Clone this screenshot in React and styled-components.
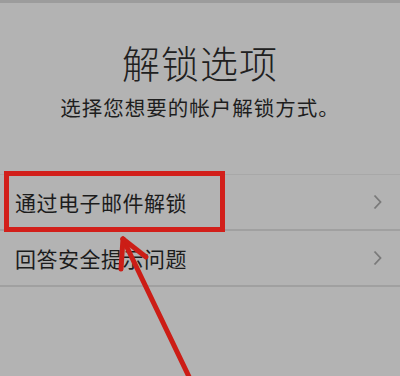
import React from 'react'
import styled, { createGlobalStyle } from 'styled-components'

const Global = createGlobalStyle`
  html, body { margin: 0; padding: 0; }
  body { background: #b3b3b3; font-family: "Noto Sans CJK SC", "Noto Sans", sans-serif; }
`

const Page = styled.div`
  position: relative;
  width: 400px;
  height: 376px;
  overflow: hidden;
  background: #b3b3b3;
  border-top: 3px solid #9c9c9c;
  box-sizing: border-box;
`

const Header = styled.div`
  display: flex;
  flex-direction: column;
  align-items: center;
  padding-top: 37px;
`

const Title = styled.h1`
  margin: 0;
  font-size: 38px;
  line-height: 44px;
  font-weight: 300;
  color: #202020;
  letter-spacing: 1px;
`

const Subtitle = styled.p`
  margin: 10px 0 0;
  font-size: 20.5px;
  line-height: 26px;
  color: #1e1e1e;
  letter-spacing: 1px;
`

const List = styled.div`
  position: relative;
  margin-top: 54px;
  border-top: 1px solid #a8a8a8;
`

const Row = styled.div`
  display: flex;
  align-items: center;
  justify-content: space-between;
  height: 56px;
  padding: 0 18px 0 15px;
  box-sizing: border-box;
  border-bottom: 2px solid #a0a0a0;
`

const Label = styled.span`
  font-size: 21px;
  color: #1c1c1c;
  letter-spacing: 0.5px;
`

const Chevron = styled.svg`
  width: 9px;
  height: 16px;
  flex: none;
`

const Highlight = styled.div`
  position: absolute;
  left: 4px;
  top: -4px;
  width: 221px;
  height: 61px;
  border: 5px solid #d21f1a;
  box-sizing: border-box;
  pointer-events: none;
`

const Overlay = styled.svg`
  position: absolute;
  left: 0;
  top: 0;
  pointer-events: none;
`

const items = ['通过电子邮件解锁', '回答安全提示问题']

export default function App() {
  return (
    <>
      <Global />
      <Page>
        <Header>
          <Title>解锁选项</Title>
          <Subtitle>选择您想要的帐户解锁方式。</Subtitle>
        </Header>
        <List>
          {items.map((t) => (
            <Row key={t}>
              <Label>{t}</Label>
              <Chevron viewBox="0 0 9 16">
                <path d="M1.5 1.5 L7.5 8 L1.5 14.5" fill="none" stroke="#7a7a7a" strokeWidth="1.8" />
              </Chevron>
            </Row>
          ))}
          <Highlight />
        </List>
        <Overlay width="400" height="376" viewBox="0 0 400 376">
          <g stroke="#cc1d16" strokeWidth="5" strokeLinecap="round" fill="none">
            <path d="M123 236 L192 380" />
            <path d="M123 236 L121 266" />
            <path d="M123 236 L146 254" />
          </g>
        </Overlay>
      </Page>
    </>
  )
}
